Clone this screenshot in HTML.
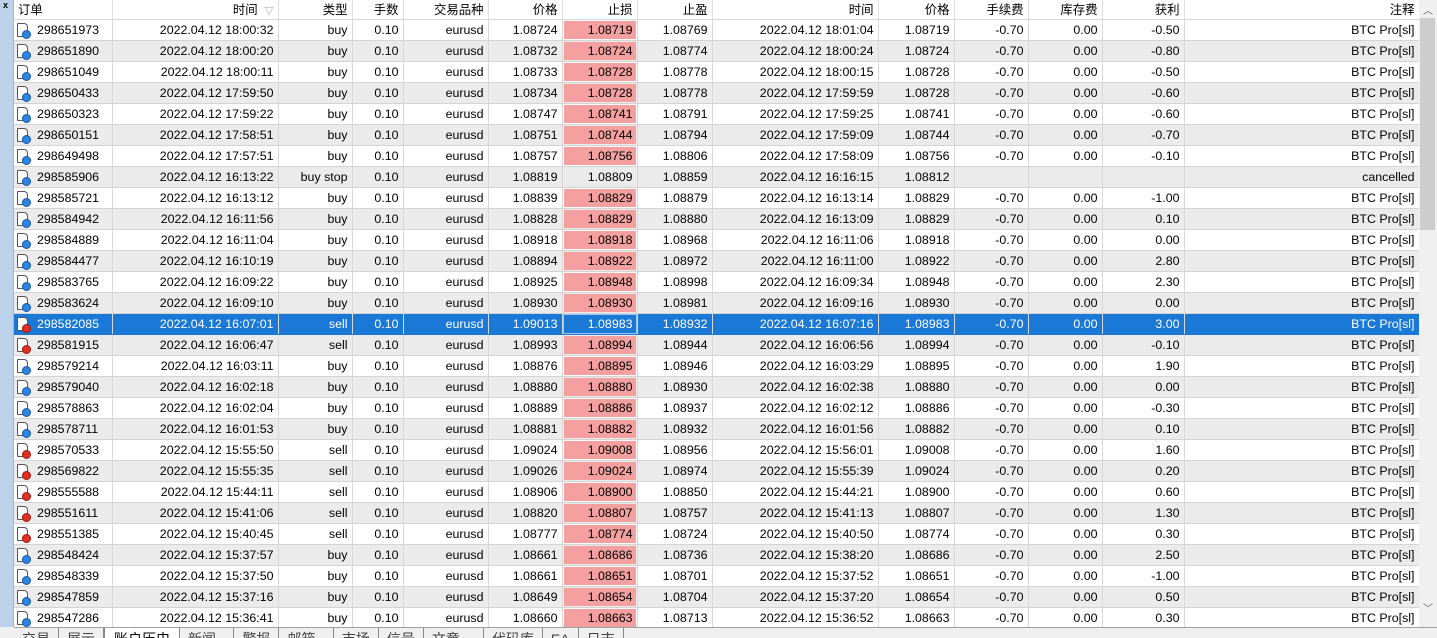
<!DOCTYPE html>
<html><head><meta charset="utf-8"><style>
*{margin:0;padding:0;box-sizing:border-box}
body{width:1437px;height:638px;overflow:hidden;background:#f0f0f0;font-family:"Liberation Sans","Noto Sans CJK SC",sans-serif;font-size:12.4px;color:#000;position:relative}
#left{position:absolute;left:0;top:0;width:14px;height:627px;background:#bcd2ea;border-right:1px solid #a0b4cc}
#left span{position:absolute;left:3px;top:0;font-size:9px;font-weight:bold}
#wrap{position:absolute;left:14px;top:0;width:1405px;height:627px;overflow:hidden;background:#fff}
table{border-collapse:collapse;table-layout:fixed;width:1405px}
th{height:19px;font-weight:normal;text-align:right;padding:0 4px;border-right:1px solid #e0e0e0;border-bottom:1px solid #d8d8d8;background:#fff;white-space:nowrap;overflow:hidden}
th.l{text-align:left}
td{height:21px;text-align:right;padding:0 4px;border-right:1px solid #d8d8d8;border-bottom:1px solid #d4d4d4;white-space:nowrap;overflow:hidden}
tr.g td{background:#ebebeb}
tr td.sl{background:#f4a0a0;box-shadow:inset 0 0 0 1px #fff}
tr.g td.sl{background:#f4a0a0;box-shadow:inset 0 0 0 1px #ebebeb}
td.o{text-align:left;padding-left:3px}
tr.s td{background:#1a78d7;color:#fff;border-bottom-color:#1a78d7}
tr.s td.sl{background:#1a78d7;box-shadow:inset 0 0 0 1px #9cc4ee}
.ic{display:inline-block;width:11px;height:14px;border:1px solid #555;border-radius:1px 4px 1px 1px;background:#fff;position:relative;vertical-align:-3px;margin-right:9px}
.ic::after{content:"";position:absolute;right:-4px;bottom:-3px;width:7px;height:7px;border-radius:50%;background:#2a86e0;border:1px solid #1458a8}
.ic.r::after{background:#e03020;border-color:#a01810}
#sb{position:absolute;left:1419px;top:0;width:18px;height:627px;background:#f0f0f0}
#thumb{position:absolute;left:1px;top:18px;width:15px;height:212px;background:#cdcdcd}
.ar{position:absolute;left:4px;font-size:10px;color:#606060}
#tabs{position:absolute;left:14px;top:627px;width:1423px;height:11px;background:#f0f0f0;border-top:1px solid #a0a0a0;overflow:hidden;white-space:nowrap}
#tabs span{display:inline-block;padding:0 8px;line-height:22px;font-size:14px;color:#444;border-right:1px solid #888;height:22px}
#tabs span.a{background:#fff;color:#000;border:1px solid #888;border-top:none;margin-top:-2px;padding:0 9px}
#tabs i{color:#d02020;font-style:normal;font-size:10px}
</style></head><body>
<div id="left"><span>x</span></div>
<div id="wrap"><table>
<colgroup><col style="width:98px"><col style="width:166px"><col style="width:74px"><col style="width:51px"><col style="width:85px"><col style="width:74px"><col style="width:75px"><col style="width:75px"><col style="width:166px"><col style="width:76px"><col style="width:74px"><col style="width:74px"><col style="width:82px"><col style="width:235px"></colgroup>
<tr><th class="l">订单</th><th>时间 &nbsp;<span style="color:#888;font-size:9px">▽</span></th><th>类型</th><th>手数</th><th>交易品种</th><th>价格</th><th>止损</th><th>止盈</th><th>时间</th><th>价格</th><th>手续费</th><th>库存费</th><th>获利</th><th>注释</th></tr>
<tr><td class="o"><span class="ic"></span>298651973</td><td>2022.04.12 18:00:32</td><td>buy</td><td>0.10</td><td>eurusd</td><td>1.08724</td><td class="sl">1.08719</td><td>1.08769</td><td>2022.04.12 18:01:04</td><td>1.08719</td><td>-0.70</td><td>0.00</td><td>-0.50</td><td>BTC Pro[sl]</td></tr>
<tr class="g"><td class="o"><span class="ic"></span>298651890</td><td>2022.04.12 18:00:20</td><td>buy</td><td>0.10</td><td>eurusd</td><td>1.08732</td><td class="sl">1.08724</td><td>1.08774</td><td>2022.04.12 18:00:24</td><td>1.08724</td><td>-0.70</td><td>0.00</td><td>-0.80</td><td>BTC Pro[sl]</td></tr>
<tr><td class="o"><span class="ic"></span>298651049</td><td>2022.04.12 18:00:11</td><td>buy</td><td>0.10</td><td>eurusd</td><td>1.08733</td><td class="sl">1.08728</td><td>1.08778</td><td>2022.04.12 18:00:15</td><td>1.08728</td><td>-0.70</td><td>0.00</td><td>-0.50</td><td>BTC Pro[sl]</td></tr>
<tr class="g"><td class="o"><span class="ic"></span>298650433</td><td>2022.04.12 17:59:50</td><td>buy</td><td>0.10</td><td>eurusd</td><td>1.08734</td><td class="sl">1.08728</td><td>1.08778</td><td>2022.04.12 17:59:59</td><td>1.08728</td><td>-0.70</td><td>0.00</td><td>-0.60</td><td>BTC Pro[sl]</td></tr>
<tr><td class="o"><span class="ic"></span>298650323</td><td>2022.04.12 17:59:22</td><td>buy</td><td>0.10</td><td>eurusd</td><td>1.08747</td><td class="sl">1.08741</td><td>1.08791</td><td>2022.04.12 17:59:25</td><td>1.08741</td><td>-0.70</td><td>0.00</td><td>-0.60</td><td>BTC Pro[sl]</td></tr>
<tr class="g"><td class="o"><span class="ic"></span>298650151</td><td>2022.04.12 17:58:51</td><td>buy</td><td>0.10</td><td>eurusd</td><td>1.08751</td><td class="sl">1.08744</td><td>1.08794</td><td>2022.04.12 17:59:09</td><td>1.08744</td><td>-0.70</td><td>0.00</td><td>-0.70</td><td>BTC Pro[sl]</td></tr>
<tr><td class="o"><span class="ic"></span>298649498</td><td>2022.04.12 17:57:51</td><td>buy</td><td>0.10</td><td>eurusd</td><td>1.08757</td><td class="sl">1.08756</td><td>1.08806</td><td>2022.04.12 17:58:09</td><td>1.08756</td><td>-0.70</td><td>0.00</td><td>-0.10</td><td>BTC Pro[sl]</td></tr>
<tr class="g"><td class="o"><span class="ic"></span>298585906</td><td>2022.04.12 16:13:22</td><td>buy stop</td><td>0.10</td><td>eurusd</td><td>1.08819</td><td>1.08809</td><td>1.08859</td><td>2022.04.12 16:16:15</td><td>1.08812</td><td></td><td></td><td></td><td>cancelled</td></tr>
<tr><td class="o"><span class="ic"></span>298585721</td><td>2022.04.12 16:13:12</td><td>buy</td><td>0.10</td><td>eurusd</td><td>1.08839</td><td class="sl">1.08829</td><td>1.08879</td><td>2022.04.12 16:13:14</td><td>1.08829</td><td>-0.70</td><td>0.00</td><td>-1.00</td><td>BTC Pro[sl]</td></tr>
<tr class="g"><td class="o"><span class="ic"></span>298584942</td><td>2022.04.12 16:11:56</td><td>buy</td><td>0.10</td><td>eurusd</td><td>1.08828</td><td class="sl">1.08829</td><td>1.08880</td><td>2022.04.12 16:13:09</td><td>1.08829</td><td>-0.70</td><td>0.00</td><td>0.10</td><td>BTC Pro[sl]</td></tr>
<tr><td class="o"><span class="ic"></span>298584889</td><td>2022.04.12 16:11:04</td><td>buy</td><td>0.10</td><td>eurusd</td><td>1.08918</td><td class="sl">1.08918</td><td>1.08968</td><td>2022.04.12 16:11:06</td><td>1.08918</td><td>-0.70</td><td>0.00</td><td>0.00</td><td>BTC Pro[sl]</td></tr>
<tr class="g"><td class="o"><span class="ic"></span>298584477</td><td>2022.04.12 16:10:19</td><td>buy</td><td>0.10</td><td>eurusd</td><td>1.08894</td><td class="sl">1.08922</td><td>1.08972</td><td>2022.04.12 16:11:00</td><td>1.08922</td><td>-0.70</td><td>0.00</td><td>2.80</td><td>BTC Pro[sl]</td></tr>
<tr><td class="o"><span class="ic"></span>298583765</td><td>2022.04.12 16:09:22</td><td>buy</td><td>0.10</td><td>eurusd</td><td>1.08925</td><td class="sl">1.08948</td><td>1.08998</td><td>2022.04.12 16:09:34</td><td>1.08948</td><td>-0.70</td><td>0.00</td><td>2.30</td><td>BTC Pro[sl]</td></tr>
<tr class="g"><td class="o"><span class="ic"></span>298583624</td><td>2022.04.12 16:09:10</td><td>buy</td><td>0.10</td><td>eurusd</td><td>1.08930</td><td class="sl">1.08930</td><td>1.08981</td><td>2022.04.12 16:09:16</td><td>1.08930</td><td>-0.70</td><td>0.00</td><td>0.00</td><td>BTC Pro[sl]</td></tr>
<tr class="s"><td class="o"><span class="ic r"></span>298582085</td><td>2022.04.12 16:07:01</td><td>sell</td><td>0.10</td><td>eurusd</td><td>1.09013</td><td class="sl">1.08983</td><td>1.08932</td><td>2022.04.12 16:07:16</td><td>1.08983</td><td>-0.70</td><td>0.00</td><td>3.00</td><td>BTC Pro[sl]</td></tr>
<tr class="g"><td class="o"><span class="ic r"></span>298581915</td><td>2022.04.12 16:06:47</td><td>sell</td><td>0.10</td><td>eurusd</td><td>1.08993</td><td class="sl">1.08994</td><td>1.08944</td><td>2022.04.12 16:06:56</td><td>1.08994</td><td>-0.70</td><td>0.00</td><td>-0.10</td><td>BTC Pro[sl]</td></tr>
<tr><td class="o"><span class="ic"></span>298579214</td><td>2022.04.12 16:03:11</td><td>buy</td><td>0.10</td><td>eurusd</td><td>1.08876</td><td class="sl">1.08895</td><td>1.08946</td><td>2022.04.12 16:03:29</td><td>1.08895</td><td>-0.70</td><td>0.00</td><td>1.90</td><td>BTC Pro[sl]</td></tr>
<tr class="g"><td class="o"><span class="ic"></span>298579040</td><td>2022.04.12 16:02:18</td><td>buy</td><td>0.10</td><td>eurusd</td><td>1.08880</td><td class="sl">1.08880</td><td>1.08930</td><td>2022.04.12 16:02:38</td><td>1.08880</td><td>-0.70</td><td>0.00</td><td>0.00</td><td>BTC Pro[sl]</td></tr>
<tr><td class="o"><span class="ic"></span>298578863</td><td>2022.04.12 16:02:04</td><td>buy</td><td>0.10</td><td>eurusd</td><td>1.08889</td><td class="sl">1.08886</td><td>1.08937</td><td>2022.04.12 16:02:12</td><td>1.08886</td><td>-0.70</td><td>0.00</td><td>-0.30</td><td>BTC Pro[sl]</td></tr>
<tr class="g"><td class="o"><span class="ic"></span>298578711</td><td>2022.04.12 16:01:53</td><td>buy</td><td>0.10</td><td>eurusd</td><td>1.08881</td><td class="sl">1.08882</td><td>1.08932</td><td>2022.04.12 16:01:56</td><td>1.08882</td><td>-0.70</td><td>0.00</td><td>0.10</td><td>BTC Pro[sl]</td></tr>
<tr><td class="o"><span class="ic r"></span>298570533</td><td>2022.04.12 15:55:50</td><td>sell</td><td>0.10</td><td>eurusd</td><td>1.09024</td><td class="sl">1.09008</td><td>1.08956</td><td>2022.04.12 15:56:01</td><td>1.09008</td><td>-0.70</td><td>0.00</td><td>1.60</td><td>BTC Pro[sl]</td></tr>
<tr class="g"><td class="o"><span class="ic r"></span>298569822</td><td>2022.04.12 15:55:35</td><td>sell</td><td>0.10</td><td>eurusd</td><td>1.09026</td><td class="sl">1.09024</td><td>1.08974</td><td>2022.04.12 15:55:39</td><td>1.09024</td><td>-0.70</td><td>0.00</td><td>0.20</td><td>BTC Pro[sl]</td></tr>
<tr><td class="o"><span class="ic r"></span>298555588</td><td>2022.04.12 15:44:11</td><td>sell</td><td>0.10</td><td>eurusd</td><td>1.08906</td><td class="sl">1.08900</td><td>1.08850</td><td>2022.04.12 15:44:21</td><td>1.08900</td><td>-0.70</td><td>0.00</td><td>0.60</td><td>BTC Pro[sl]</td></tr>
<tr class="g"><td class="o"><span class="ic r"></span>298551611</td><td>2022.04.12 15:41:06</td><td>sell</td><td>0.10</td><td>eurusd</td><td>1.08820</td><td class="sl">1.08807</td><td>1.08757</td><td>2022.04.12 15:41:13</td><td>1.08807</td><td>-0.70</td><td>0.00</td><td>1.30</td><td>BTC Pro[sl]</td></tr>
<tr><td class="o"><span class="ic r"></span>298551385</td><td>2022.04.12 15:40:45</td><td>sell</td><td>0.10</td><td>eurusd</td><td>1.08777</td><td class="sl">1.08774</td><td>1.08724</td><td>2022.04.12 15:40:50</td><td>1.08774</td><td>-0.70</td><td>0.00</td><td>0.30</td><td>BTC Pro[sl]</td></tr>
<tr class="g"><td class="o"><span class="ic"></span>298548424</td><td>2022.04.12 15:37:57</td><td>buy</td><td>0.10</td><td>eurusd</td><td>1.08661</td><td class="sl">1.08686</td><td>1.08736</td><td>2022.04.12 15:38:20</td><td>1.08686</td><td>-0.70</td><td>0.00</td><td>2.50</td><td>BTC Pro[sl]</td></tr>
<tr><td class="o"><span class="ic"></span>298548339</td><td>2022.04.12 15:37:50</td><td>buy</td><td>0.10</td><td>eurusd</td><td>1.08661</td><td class="sl">1.08651</td><td>1.08701</td><td>2022.04.12 15:37:52</td><td>1.08651</td><td>-0.70</td><td>0.00</td><td>-1.00</td><td>BTC Pro[sl]</td></tr>
<tr class="g"><td class="o"><span class="ic"></span>298547859</td><td>2022.04.12 15:37:16</td><td>buy</td><td>0.10</td><td>eurusd</td><td>1.08649</td><td class="sl">1.08654</td><td>1.08704</td><td>2022.04.12 15:37:20</td><td>1.08654</td><td>-0.70</td><td>0.00</td><td>0.50</td><td>BTC Pro[sl]</td></tr>
<tr><td class="o"><span class="ic"></span>298547286</td><td>2022.04.12 15:36:41</td><td>buy</td><td>0.10</td><td>eurusd</td><td>1.08660</td><td class="sl">1.08663</td><td>1.08713</td><td>2022.04.12 15:36:52</td><td>1.08663</td><td>-0.70</td><td>0.00</td><td>0.30</td><td>BTC Pro[sl]</td></tr>
</table></div>
<div id="sb"><span class="ar" style="top:2px">︿</span><div id="thumb"></div><span class="ar" style="top:600px">﹀</span></div>
<div id="tabs"><span>交易</span><span>展示</span><span class="a">账户历史</span><span>新闻 <i>..</i></span><span>警报</span><span>邮箱 <i>..</i></span><span>市场</span><span>信号</span><span>文章 <i>....</i></span><span>代码库</span><span>EA</span><span>日志</span></div>
</body></html>
